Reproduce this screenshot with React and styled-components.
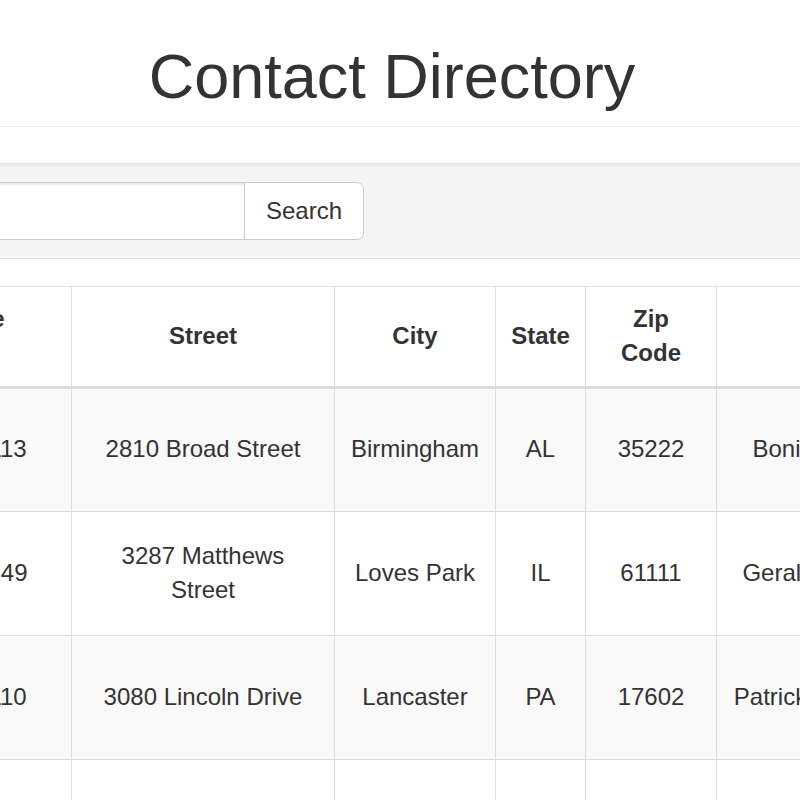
import styled, { createGlobalStyle } from 'styled-components'

const GlobalStyle = createGlobalStyle`
    * { box-sizing: border-box; }
    html, body {
        margin: 0;
        padding: 0;
        background: #fff;
        overflow: hidden;
    }
    body {
        font-family: "Liberation Sans", Arial, sans-serif;
        font-size: 24px;
        line-height: 1.43;
        color: #333;
    }
`

const Page = styled.div`
    width: 1176px;
    margin-left: -196px;
    padding: 0 15px;
`

const PageHeader = styled.div`
    padding: 42px 0 16px;
    border-bottom: 1px solid #eee;
    h1 {
        margin: 0;
        font-size: 63px;
        line-height: 68px;
        font-weight: 500;
        text-align: center;
        color: #333;
    }
`

const Well = styled.div`
    margin-top: 36px;
    padding: 18px 33px;
    background: #f5f5f5;
    border: 1px solid #e3e3e3;
    border-radius: 7px;
    box-shadow: inset 0 2px 2px rgba(0, 0, 0, .05);
`

const InputGroup = styled.div`
    display: flex;
    height: 58px;
`

const SearchInput = styled.input`
    width: 391px;
    height: 58px;
    padding: 10px 20px;
    font: inherit;
    color: #555;
    background: #fff;
    border: 1px solid #ccc;
    border-right: none;
    border-radius: 7px 0 0 7px;
    box-shadow: inset 0 2px 2px rgba(0, 0, 0, .075);
    outline: none;
`

const SearchButton = styled.button`
    height: 58px;
    padding: 0 21px;
    font: inherit;
    color: #333;
    background: #fff;
    border: 1px solid #ccc;
    border-radius: 0 7px 7px 0;
    cursor: pointer;
`

const Table = styled.table`
    margin-top: 27px;
    width: 100%;
    table-layout: fixed;
    border-collapse: collapse;
    border: 1px solid #ddd;
`

const Th = styled.th`
    padding: 15px 14px;
    border: 1px solid #ddd;
    border-bottom: 3px solid #ddd;
    font-weight: bold;
    text-align: center;
    vertical-align: middle;
    white-space: pre;
`

const Row = styled.tr`
    height: 124px;
    background: ${props => props.$striped ? '#f9f9f9' : '#fff'};
`

const Td = styled.td`
    padding: 14px;
    border: 1px solid #ddd;
    text-align: center;
    vertical-align: middle;
    white-space: pre;
`

const columns = [
    { label: 'Telephone\nNumber', width: 252 },
    { label: 'Street', width: 263 },
    { label: 'City', width: 161 },
    { label: 'State', width: 90 },
    { label: 'Zip\nCode', width: 131 },
    { label: 'Name' },
]

const contacts = [
    ['(205) 555-0113', '2810 Broad Street', 'Birmingham', 'AL', '35222', 'Bonita Robinson'],
    ['(815) 555-0149', '3287 Matthews\nStreet', 'Loves Park', 'IL', '61111', 'Gerald Henderson'],
    ['(717) 555-0110', '3080 Lincoln Drive', 'Lancaster', 'PA', '17602', 'Patrick Montgomery'],
    ['(937) 555-0182', '1244 Oak Avenue', 'Springfield', 'OH', '45502', 'Laura Mitchell'],
]

const App = () => {
    return (
        <>
            <GlobalStyle />
            <Page>
                <PageHeader>
                    <h1>Contact Directory</h1>
                </PageHeader>
                <Well>
                    <InputGroup>
                        <SearchInput type="text" />
                        <SearchButton type="button">Search</SearchButton>
                    </InputGroup>
                </Well>
                <Table>
                    <colgroup>
                        {columns.map((c, i) => (
                            <col key={i} style={c.width ? { width: c.width } : undefined} />
                        ))}
                    </colgroup>
                    <thead>
                        <tr>
                            {columns.map((c, i) => <Th key={i}>{c.label}</Th>)}
                        </tr>
                    </thead>
                    <tbody>
                        {contacts.map((row, i) => (
                            <Row key={i} $striped={i % 2 === 0}>
                                {row.map((cell, j) => <Td key={j}>{cell}</Td>)}
                            </Row>
                        ))}
                    </tbody>
                </Table>
            </Page>
        </>
    )
}

export default App
